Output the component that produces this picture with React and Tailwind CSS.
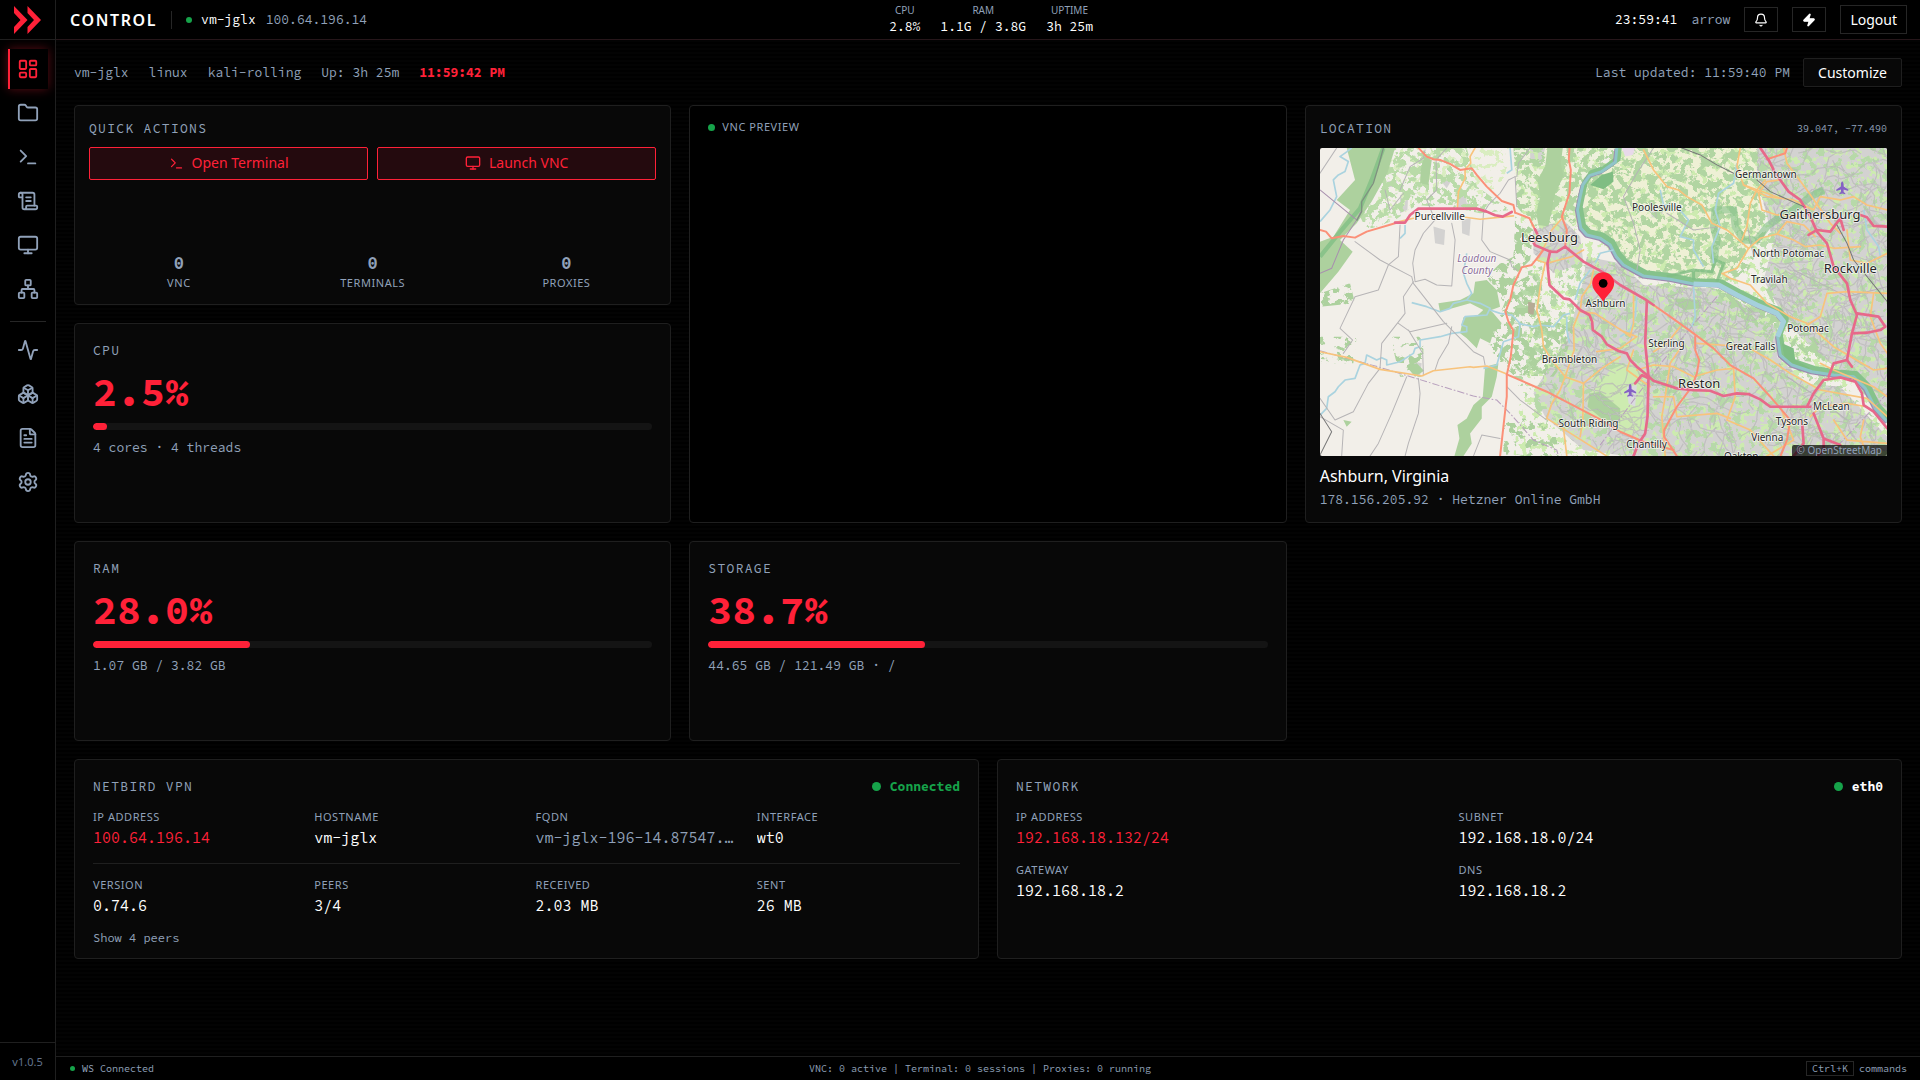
import {
  Activity, Bell, Boxes, FileText, Folder, LayoutDashboard, Monitor, Network,
  ScrollText, Settings, Terminal, Zap,
} from 'lucide-react';

const mainNav = [
  { label: 'Dashboard', icon: LayoutDashboard, active: true },
  { label: 'Files', icon: Folder },
  { label: 'Terminal', icon: Terminal },
  { label: 'Scripts', icon: ScrollText },
  { label: 'VNC', icon: Monitor },
  { label: 'Network', icon: Network },
];

const systemNav = [
  { label: 'Activity', icon: Activity },
  { label: 'Containers', icon: Boxes },
  { label: 'Logs', icon: FileText },
  { label: 'Settings', icon: Settings },
];

const headerStats = [
  { label: 'CPU', value: '2.8%' },
  { label: 'RAM', value: '1.1G / 3.8G' },
  { label: 'UPTIME', value: '3h 25m' },
];

const sessionCounts = [
  { label: 'VNC', value: 0 },
  { label: 'TERMINALS', value: 0 },
  { label: 'PROXIES', value: 0 },
];

const vpnTop = [
  { label: 'IP ADDRESS', value: '100.64.196.14', tone: 'text-[#ff2138]' },
  { label: 'HOSTNAME', value: 'vm-jglx' },
  { label: 'FQDN', value: 'vm-jglx-196-14.87547.…', tone: 'text-slate-400' },
  { label: 'INTERFACE', value: 'wt0' },
];

const vpnBottom = [
  { label: 'VERSION', value: '0.74.6' },
  { label: 'PEERS', value: '3/4' },
  { label: 'RECEIVED', value: '2.03 MB' },
  { label: 'SENT', value: '26 MB' },
];

const networkFields = [
  { label: 'IP ADDRESS', value: '192.168.18.132/24', tone: 'text-[#ff2138]' },
  { label: 'SUBNET', value: '192.168.18.0/24' },
  { label: 'GATEWAY', value: '192.168.18.2' },
  { label: 'DNS', value: '192.168.18.2' },
];

const monoFont = "font-['Source_Code_Pro','DejaVu_Sans_Mono',monospace]";

/* ---------- map data ---------- */

const suburbs = [
  'M860 380 L960 400 L1030 465 L1240 475 L1400 560 L1440 610 L1430 680 L1520 760 L1620 770 L1761 920 V978 H980 L850 960 L735 860 L700 790 L740 720 L800 620 L820 560 L850 450Z',
  'M1370 54 H1761 V860 L1690 760 L1590 700 L1500 620 L1440 540 L1390 450 L1420 340 L1390 220 L1370 120Z',
  'M700 300 L790 270 L840 320 L850 400 L760 430 L735 400 L700 370Z',
  'M262 155 L290 150 L288 170 L265 172Z M300 195 L325 190 L322 240 L300 250Z M400 290 L435 300 L432 345 L405 340Z M470 200 L495 190 L500 220 L540 225 L515 235 L470 232Z M485 270 L512 265 L508 318 L486 310Z M420 150 L455 150 L440 175Z M345 695 L365 700 L360 740 L330 720Z',
  'M690 54 L735 54 L720 120 L690 90Z M185 54 H240 L225 95Z M1050 235 L1090 230 L1085 265 L1055 262Z',
];

const woods = [
  'M140 54 H285 L262 130 L215 215 L170 280 L120 330 L158 365 L115 425 L60 490 V335 L100 320 L150 240 L110 210 L165 150Z',
  'M742 54 H788 L782 100 L790 140 L765 190 L755 240 L745 290 L715 285 L708 250 L720 200 L712 150 L735 110Z',
  'M372 80 L395 90 L385 165 L360 160 L362 120Z',
  'M490 562 L530 558 L560 530 L580 550 L605 580 L582 600 L570 640 L540 625 L530 655 L500 625 L480 610Z',
  'M560 450 L590 480 L600 530 L560 545 L510 520 L420 545 L415 520 L480 510 L520 490 L525 455Z',
  'M555 710 L595 700 L590 740 L575 800 L545 830 L545 865 L510 910 L515 940 L490 978 H463 L478 925 L472 885 L500 865 L520 825 L548 800Z',
  'M868 790 L900 785 L960 835 V880 L905 865 L862 830Z M1125 505 L1200 510 L1205 535 L1155 540 L1125 525Z',
];

const roads = {
  minor: [
    'M165 335 L240 390 L335 440 L340 460 L430 575 L520 665 L550 680 L555 705',
    'M300 285 L295 380 L265 405 L235 480 L165 500 L120 595 L158 630 L130 670',
    'M340 455 L310 500 L315 550 L245 640 L240 715 L205 760 L160 845 L105 870 L60 805',
    'M440 54 L408 90 L410 180 L380 210 L405 270 L370 310 L345 360 L338 400 L345 455 L375 448 L410 465 L455 468 L465 330 L455 280',
    'M645 140 L625 150 L600 190 L565 225 L550 250 L545 330 L570 365 L630 390 L635 410 L650 420',
    'M320 740 L275 850 L235 940 L210 978 M355 745 L360 790 L355 850 L325 940 L315 978',
    'M455 590 L445 640 L415 690 L405 720 M295 580 L330 605 L440 580 M370 735 L368 670 L325 600',
    'M300 180 L330 110 L370 85 L375 60 M310 190 L270 240 L255 180 M650 140 L655 100 L690 54 M650 230 L645 140',
    'M60 860 L130 900 L125 978 M60 130 L110 54',
    'M620 770 L660 810 L740 870 M520 978 L545 915 L600 925',
    'M1000 280 L1020 360 L1010 420 M1000 280 L970 200 L1010 130 L1060 54 M1100 250 L1180 300 L1260 290 M1340 280 L1360 380',
    'M1480 420 L1560 460 L1640 500 L1761 470 M1460 740 L1550 800 L1640 870',
  ],
  primary: [
    'M60 665 L140 682 L240 718 L365 738 L400 722 L510 710 L520 712 L560 708 L620 732',
    'M525 54 L510 80 L512 100 L495 118 L495 145 L475 185 L472 235',
    'M495 262 L540 268 L640 258 M285 278 L340 265',
    'M790 260 L755 300 L735 345 L710 390 L740 400 L815 380 L850 360',
    'M735 400 L722 460 L710 540 L725 600 L730 650 L755 690 L795 740 L850 760 L905 715 L960 680 M795 740 L780 780 L755 820 L740 865 L920 978',
    'M880 420 L872 460 L845 500 L840 545 L885 550 L915 570 L960 598 M838 545 L820 590 L822 660 L795 740',
    'M850 760 L848 870 L840 920 M790 895 L800 978',
    'M960 598 L990 620 L1000 580 L1000 490 M890 665 L960 655 L1010 620 L960 600',
    'M1030 60 L1060 120 L1100 170 L1135 180 L1160 200 L1205 225 L1235 280 L1280 300 L1345 355',
    'M1270 430 L1310 415 L1345 355 M1265 430 L1290 445 L1350 465 L1400 520 L1470 560 L1520 580 L1600 650 L1720 720 L1761 715',
    'M1320 54 L1310 110 L1330 165 L1400 200 L1480 210 L1540 240 L1560 200 L1620 210 L1660 200 L1700 225 L1761 240',
    'M1395 150 L1370 180 L1350 220 L1340 290 L1325 330 M1450 54 L1460 100 L1520 180 L1590 280 L1620 310',
    'M1345 355 L1380 325 L1430 312 L1480 330 L1515 350 L1560 345 L1600 355 L1680 350 M1430 312 L1460 275 L1510 285 L1545 320',
    'M1440 150 L1400 155 L1375 190 L1385 240 L1430 255 L1500 260 M1330 165 L1400 190 L1440 205',
    'M1520 585 L1560 560 L1580 490 L1640 485 L1761 490 M1640 300 L1650 390 L1700 400 L1761 370',
    'M1720 490 L1710 560 L1740 640 L1761 670 M1761 800 L1720 770 L1600 720 L1560 700',
    'M1010 720 L1060 705 L1120 710 L1180 740 L1250 720 L1300 715 L1305 800 L1280 870 L1350 900 L1420 978',
    'M1190 640 L1260 645 L1340 650 L1410 690 L1470 730 L1560 780 L1700 805 L1761 860',
    'M1060 800 L1120 800 L1130 860 L1250 850 L1290 865 M1150 640 L1110 700 L1095 800 L1085 860 L1095 978',
    'M1440 830 L1480 930 L1400 978 M1530 860 L1560 830 L1640 820 L1700 830 M1600 870 L1640 930 L1761 940 M1690 870 L1680 920 L1700 978',
    'M1000 660 L980 720 L1050 770 M1140 590 L1100 640 L1060 665',
  ],
  trunk: [
    'M60 300 L78 305 L95 325 L130 318 L165 323 L200 305 L285 280',
    'M355 54 L380 80 L400 88 L420 90 L450 102 L480 120 L515 115 L530 135 L560 170 L605 213 L640 225 L645 248',
    'M645 248 L688 265 L705 300',
    'M808 54 L806 90 L812 120 L808 190 L785 260 L800 300 L795 350',
    'M730 360 L695 405 L665 412 L640 465 L630 510 L616 545 L625 575 L640 602 L632 680 L620 735 L620 800 L600 978',
    'M620 733 L740 785 L900 868 L960 905 L1030 935 L1120 960',
    'M1060 525 L1110 560 L1180 610 L1240 655 L1290 705 L1360 745 L1410 800 L1470 870',
    'M1185 620 L1185 660 L1197 690 L1190 730 L1175 770 L1130 830 L1092 900 L1092 920 L1130 978',
    'M1400 88 L1455 70 L1460 54 M1440 980 L1460 930 L1470 870',
  ],
  motorway: [
    'M285 278 L315 278 L330 255 L355 236 L530 236 L560 245 L585 256 L608 260 L635 246',
    'M705 298 L715 320 L700 338 L705 346 L750 365 L770 366 L795 350 L850 395 L905 425 L960 465 L1035 508 L1060 525',
    'M750 365 L742 400 L748 465 L790 505 L808 508 L840 540 L868 555 L876 575 L878 600 L905 620 L920 643 L955 663 L980 670 L990 690 L1010 710 L1040 735 L1060 752 L1130 775 L1180 780 L1230 782 L1270 798 L1310 790 L1345 792 L1380 808 L1410 830 L1530 830',
    'M1520 830 L1540 790 L1570 750 L1620 742 L1665 755 L1685 790 L1690 825 L1720 845 L1761 895',
    'M1040 515 L1035 640 L1045 740 L1042 860 L1035 910 L1015 940 L1000 978 M1005 760 L1025 735 L1045 745',
    'M1380 54 L1405 90 L1420 120 L1440 150 L1465 185 L1500 210 L1530 260 L1550 305 L1580 340 L1600 410 L1640 460 L1650 510 L1670 555 L1655 610 L1640 690 L1600 700 L1585 740',
    'M1525 315 L1550 300 L1590 305 L1620 265 L1630 300 M1680 255 L1700 262 L1720 288 L1761 290',
    'M1670 550 L1735 560 L1755 590 L1740 600 L1700 608 L1655 610',
    'M1540 850 L1570 925 L1570 960 L1550 978 M1505 870 L1510 940 L1480 978 M1570 925 L1620 945 M1640 690 L1655 710',
  ],
};

const streams = [
  'M155 54 L140 66 L120 80 L145 95 L135 125 L115 135 L100 150 L110 200 L90 240 L60 275',
  'M60 855 L80 835 L85 800 L105 785 L115 770 L135 750 L165 745 L180 705 L195 700 L200 675 L230 690 L245 683 L260 690 L260 705 L300 695 L340 670 L345 655 L360 650 L360 630 L420 620 L455 610 L500 605 L500 590 L485 585 L495 560 L560 555 L570 535 L540 520 L500 510 L460 520 L450 535 L420 545 L380 530 L335 518',
  'M500 370 L495 400 L490 430 L500 460 L515 490 L500 510 M620 130 L635 120 L630 54 M315 285 L315 310 L300 325',
  'M550 715 L590 705 L600 670 L610 635 L655 620 L660 580 L635 555 L600 550 L570 540 M655 580 L700 590 L720 585 L760 590 L790 555 L810 550',
  'M800 560 L800 600 L808 640 M870 420 L840 460 L825 510 M885 400 L900 370 L940 360 M960 620 L990 600 L1005 560 L1010 500',
  'M1080 180 L1090 225 L1130 230 L1165 270 L1140 320 L1180 330 L1180 360 L1210 410 M1310 100 L1300 160 L1255 190 L1245 240 L1260 290 L1235 350 L1240 400',
  'M1690 240 L1700 300 L1735 350 L1740 380 M1180 470 L1185 560 L1175 590',
];

const river = 'M950 54 L946 96 L905 125 L868 137 L848 165 L840 200 L832 240 L842 295 L860 315 L900 325 L930 345 L948 380 L970 405 L1030 438 L1110 448 L1180 462 L1255 465 L1310 495 L1370 525 L1430 550 L1450 575 L1432 620 L1440 675 L1475 705 L1535 725 L1600 735 L1660 740 L1695 775 L1725 835 L1761 875';

const towns = [
  { name: 'Purcellville', x: 419, y: 270 },
  { name: 'Leesburg', x: 748, y: 335, big: true },
  { name: 'Ashburn', x: 916, y: 532 },
  { name: 'Brambleton', x: 808, y: 700 },
  { name: 'South Riding', x: 865, y: 892 },
  { name: 'Poolesville', x: 1070, y: 244 },
  { name: 'Germantown', x: 1397, y: 145 },
  { name: 'Gaithersburg', x: 1559, y: 266, big: true },
  { name: 'North Potomac', x: 1464, y: 380 },
  { name: 'Rockville', x: 1650, y: 429, big: true },
  { name: 'Travilah', x: 1407, y: 460 },
  { name: 'Potomac', x: 1523, y: 605 },
  { name: 'Sterling', x: 1099, y: 651 },
  { name: 'Great Falls', x: 1351, y: 661 },
  { name: 'Reston', x: 1197, y: 774, big: true },
  { name: 'McLean', x: 1593, y: 840 },
  { name: 'Tysons', x: 1475, y: 885 },
  { name: 'Vienna', x: 1401, y: 932 },
  { name: 'Chantilly', x: 1039, y: 954 },
  { name: 'Oakton', x: 1323, y: 990 },
];

// Small seeded generator so the local streets come out the same on each render
function makeStreets(count) {
  let seed = 41;
  const rand = () => {
    seed = (seed * 16807) % 2147483647;
    return seed / 2147483647;
  };
  let d = '';
  for (let i = 0; i < count; i++) {
    let x = 680 + rand() * 1080;
    let y = 54 + rand() * 924;
    let angle = rand() * Math.PI * 2;
    d += `M${Math.round(x)} ${Math.round(y)}`;
    for (let j = 0; j < 5; j++) {
      angle += (rand() - 0.5) * 1.6;
      x += Math.cos(angle) * 22;
      y += Math.sin(angle) * 22;
      d += `L${Math.round(x)} ${Math.round(y)}`;
    }
  }
  return d;
}

const streets = makeStreets(620);

function Plane({ x, y }) {
  return (
    <path
      transform={`translate(${x} ${y})`}
      d="M0 -19 C3 -19 4 -14 4 -9 V-4 L18 5 V9 L4 5 V12 L9 16 V19 L0 17 L-9 19 V16 L-4 12 V5 L-18 9 V5 L-4 -4 V-9 C-4 -14 -3 -19 0 -19Z"
      fill="#8461c4"
    />
  );
}

// Cuts a flat area into irregular patches; a higher cut leaves fewer of them
function PatchFilter({ id, seed, frequency, cut }) {
  return (
    <filter id={id} x="0" y="0" width="1" height="1" colorInterpolationFilters="sRGB">
      <feTurbulence type="fractalNoise" baseFrequency={frequency} numOctaves="5" seed={seed} result="noise" />
      <feColorMatrix in="noise" values={`0 0 0 0 0  0 0 0 0 0  0 0 0 0 0  18 0 0 0 ${-cut}`} result="mask" />
      <feComposite in="SourceGraphic" in2="mask" operator="in" />
    </filter>
  );
}

function RegionMap() {
  return (
    <svg viewBox="60 54 1701 924" preserveAspectRatio="xMidYMid slice" className="absolute inset-0 h-full w-full" role="img" aria-label="Map of Ashburn, Virginia">
      <defs>
        <PatchFilter id="denseWoods" seed={7} frequency="0.045" cut={8.8} />
        <PatchFilter id="sparseWoods" seed={12} frequency="0.04" cut={10.1} />
        <PatchFilter id="meadow" seed={23} frequency="0.05" cut={10.2} />
        <clipPath id="builtUp">
          {suburbs.map((d) => <path key={d} d={d} />)}
        </clipPath>
      </defs>

      <rect x="60" y="54" width="1701" height="924" fill="#f2efe9" />
      <path d="M955 54 H1370 L1380 330 L1260 460 L1050 435 L960 380 L930 335 L850 300 L850 190 L870 140 L945 100Z" fill="#eef0d5" />
      <path d="M640 54 H945 L870 130 L840 190 L840 290 L700 290 L650 200Z" fill="#eef0dd" />
      {suburbs.map((d) => <path key={d} d={d} fill="#d3d2d1" />)}

      <g filter="url(#meadow)">
        <path d="M640 54 H1761 V978 H640 L690 560Z" fill="#cdebb0" />
        <path d="M240 54 H640 L600 180 L540 225 L480 120 L300 260 L220 270Z" fill="#d9edc0" />
      </g>
      <g filter="url(#sparseWoods)">
        <path d="M640 440 L800 380 L960 400 L1240 475 L1440 560 L1430 680 L1600 740 L1761 900 V978 H960 L900 940 L700 870 L640 740Z M1370 54 H1761 V850 L1580 700 L1440 560 L1380 450Z" fill="#b7d9a9" />
        <path d="M60 620 H170 L160 700 H60Z M610 860 L720 870 L860 978 H610Z M270 620 H370 V740 H300Z" fill="#add19e" />
      </g>
      <g filter="url(#denseWoods)">
        <path d="M240 54 H500 L530 170 L630 240 L540 250 L470 235 L350 225 L285 270 L200 300 L180 260 L240 170Z" fill="#b9dba8" />
        <path d="M640 54 H1370 L1400 300 L1340 430 L1260 460 L1050 435 L960 380 L930 335 L850 310 L800 270 L700 290 L650 230Z" fill="#b1d5a2" />
        <path d="M645 260 L700 300 L690 390 L650 430 L620 530 L560 440 L600 400 L640 380Z M560 640 L640 460 L720 420 L735 560 L820 600 L790 700 L760 740 L640 735 L600 700Z M60 490 L150 460 L165 520 L60 530Z" fill="#add19e" />
        <path d="M1240 470 L1440 560 L1430 620 L1300 560Z M1440 520 L1560 640 L1580 700 L1480 690Z M1040 720 L1130 720 L1130 790 L1060 790Z" fill="#b1d5a2" />
      </g>
      <path d="M965 705 L1015 700 L1020 740 L1035 800 L1030 900 L960 905 L870 855 L858 800 L900 760 L930 720Z" fill="#cdebb0" />
      {woods.map((d) => <path key={d} d={d} fill="#add19e" />)}
      <path d="M980 770 L1010 765 L1005 830 L985 820Z" fill="#dadae0" />
      <path d="M250 54 L215 150 L180 235 L125 300 L60 380" fill="none" stroke="#7fbd83" strokeWidth="13" opacity="0.75" />
      <path d="M320 710 L350 700 L372 722 L345 740Z M130 870 L155 875 L140 890Z" fill="#add19e" />
      <path d="M684 515 L705 520 L700 555 L684 550Z" fill="#b5ab95" />
      <path d="M965 54 H1005 L998 75 L975 80Z" fill="#e8d9ea" />

      <g clipPath="url(#builtUp)">
        <path d={streets} fill="none" stroke="#a9a7a9" strokeWidth="3" opacity="0.75" />
        <path d={streets} fill="none" stroke="#ffffff" strokeWidth="1" opacity="0.5" />
      </g>

      <path d={river} transform="translate(7 -9)" fill="none" stroke="#86c28b" strokeWidth="17" strokeLinejoin="round" />
      <path d="M1240 400 L1250 330 L1240 290 L1245 240 L1300 240 L1305 290 L1330 330 L1370 330 L1400 290 L1440 260 L1480 240 L1530 200 L1570 180" fill="none" stroke="#86c28b" strokeWidth="22" strokeLinejoin="round" opacity="0.6" />
      <path d="M1100 440 L1180 420 L1235 425 L1245 390 L1270 400 L1250 455 M1180 420 V450" fill="none" stroke="#7fbd83" strokeWidth="9" opacity="0.8" />
      <path d="M1445 640 L1480 655 L1485 690 L1530 715 L1500 725 L1455 695Z M870 165 L905 135 L938 125 L940 155 L910 178Z" fill="#7fbd83" />
      <path d={river} transform="translate(-3 3)" fill="none" stroke="#9d8bb0" strokeWidth="9" strokeLinejoin="round" />
      <path d={river} fill="none" stroke="#8fc5c8" strokeWidth="9" strokeLinejoin="round" />
      <path d="M1180 462 L1255 465 L1310 495 L1370 525 L1430 550 L1450 575 L1432 620" fill="none" stroke="#a5d0dc" strokeWidth="15" strokeLinejoin="round" />
      {streams.map((d) => <path key={d} d={d} fill="none" stroke="#aad3df" strokeWidth="5" strokeLinejoin="round" />)}

      <path d="M60 662 L240 712 L520 798 L590 810 L630 850 L700 930 L770 960 L775 978 M1250 500 L1090 690 L900 945 M1761 790 L1600 960" fill="none" stroke="#b79fbd" strokeWidth="3" strokeDasharray="22 6 5 6" />
      <path d="M60 180 L170 270 L130 330 L95 415 L60 430 M170 270 L185 240" fill="none" stroke="#a890ae" strokeWidth="3" />
      <path d="M250 54 L235 110 L220 160 L185 215 L185 245 L170 272" fill="none" stroke="#7f9180" strokeWidth="4" />

      <g fill="none" strokeLinejoin="round" strokeLinecap="round">
        {roads.minor.map((d) => <path key={d} d={d} stroke="#b6b4b6" strokeWidth="3" />)}
        {roads.primary.map((d) => <path key={d} d={d} stroke="#f8c37c" strokeWidth="5" />)}
        {roads.trunk.map((d) => <path key={d} d={d} stroke="#fb9078" strokeWidth="6" />)}
        {roads.motorway.map((d) => <path key={d} d={d} stroke="#e7698a" strokeWidth="8" />)}
        <path d="M1145 54 L1200 75 L1250 105 L1300 130 M1370 150 L1410 185 L1510 230 M1610 285 L1640 340 L1660 390 L1761 515 M60 975 L95 905 L60 850" stroke="#777" strokeWidth="3" />
      </g>

      <g textAnchor="middle" stroke="#ffffff" strokeOpacity="0.75" strokeWidth="5" strokeLinejoin="round" paintOrder="stroke" className="font-['Noto_Sans',sans-serif]">
        {towns.map((t) => (
          <text key={t.name} x={t.x} y={t.y} fontSize={t.big ? 39 : 30} fill="#262626">{t.name}</text>
        ))}
        <g fontSize="30" fontStyle="italic" fill="#8d6f99">
          <text x="530" y="397">Loudoun</text>
          <text x="531" y="433">County</text>
        </g>
      </g>
      <Plane x={1626} y={174} />
      <Plane x={990} y={781} />
      <path d="M909 515 C898 495 876 482 876 460 A33 33 0 0 1 942 460 C942 482 920 495 909 515Z" fill="#ff2138" />
      <circle cx="909" cy="460" r="13" fill="#000000" />
    </svg>
  );
}

/* ---------- building blocks ---------- */

function NavItem({ label, icon: Icon, active }) {
  return (
    <button
      aria-label={label}
      className={
        active
          ? 'flex size-10 items-center justify-center border-l-2 border-[#ff2138] bg-black pr-0.5 text-[#ff2138] shadow-[0_0_10px_rgba(255,33,56,0.35)]'
          : 'flex size-10 items-center justify-center text-slate-400'
      }
    >
      <Icon size={22} />
    </button>
  );
}

function Card({ className = '', children }) {
  return (
    <section className={`flex min-w-0 flex-col rounded-sm border border-[#1f1f1f] bg-[#080808] ${className}`}>
      {children}
    </section>
  );
}

function CardTitle({ children }) {
  return <h2 className={`${monoFont} text-[13px] leading-[17px] tracking-widest text-slate-400`}>{children}</h2>;
}

function Field({ label, value, tone = 'text-white' }) {
  return (
    <div className="min-w-0">
      <dt className="text-[11px] leading-4 tracking-wider text-slate-400">{label}</dt>
      <dd className={`${monoFont} mt-[3px] truncate text-[15px] leading-5 ${tone}`}>{value}</dd>
    </div>
  );
}

function UsageCard({ title, percent, detail }) {
  return (
    <Card className="col-span-2 p-[18px]">
      <CardTitle>{title}</CardTitle>
      <p className={`${monoFont} mt-2.5 text-[40px] leading-[46px] font-bold text-[#ff2138]`}>{percent.toFixed(1)}%</p>
      <div className="mt-2 h-[7px] overflow-hidden rounded-full bg-[#141414]">
        <div className="h-full rounded-full bg-[#ff2138]" style={{ width: `${percent}%` }} />
      </div>
      <p className={`${monoFont} mt-[9px] text-[13px] leading-[17px] text-slate-400`}>{detail}</p>
    </Card>
  );
}

function Sidebar() {
  return (
    <aside className="flex w-14 shrink-0 flex-col border-r border-[#1f1f1f] bg-black">
      <div className="flex h-10 items-center justify-center border-b border-[#1f1f1f]">
        <svg width="27" height="28" viewBox="0 0 27 28" fill="#ff2138" aria-label="Control">
          <path d="M0 0 L13.5 14 L0 28 V21 L6.5 14 L0 7Z" />
          <path d="M13.5 0 L27 14 L13.5 28 V21 L20 14 L13.5 7Z" />
        </svg>
      </div>
      <nav className="flex flex-col items-center gap-1 pt-[9px]">
        {mainNav.map((item) => <NavItem key={item.label} {...item} />)}
        <hr className="mt-2 mb-1 h-px w-9 border-0 bg-[#262626]" />
        {systemNav.map((item) => <NavItem key={item.label} {...item} />)}
      </nav>
      <p className="mt-auto border-t border-[#1f1f1f] py-2.5 text-center text-[11px] leading-[17px] text-slate-500">v1.0.5</p>
    </aside>
  );
}

function Header() {
  return (
    <header className="flex h-10 shrink-0 items-center justify-between border-b border-[#26161a] bg-black pr-[13px] pl-3.5 shadow-[0_1px_0_#4d0a12]">
      <div className="flex items-center">
        <h1 className="text-base leading-5 font-semibold tracking-widest text-white">CONTROL</h1>
        <span className="mx-3.5 h-[18px] w-px bg-[#262626]" />
        <span className="mr-[9px] size-1.5 rounded-full bg-[#16a34a]" />
        <p className={`${monoFont} flex gap-2.5 text-[13px]`}>
          <span className="text-white">vm-jglx</span>
          <span className="text-slate-400">100.64.196.14</span>
        </p>
      </div>
      <dl className="flex gap-5 pb-0.5 text-center">
        {headerStats.map((s) => (
          <div key={s.label}>
            <dt className="text-[10px] leading-4 text-slate-400">{s.label}</dt>
            <dd className={`${monoFont} text-[13px] leading-[17px] text-white`}>{s.value}</dd>
          </div>
        ))}
      </dl>
      <div className="flex items-center gap-3.5">
        <time className={`${monoFont} text-[13px] text-white`}>23:59:41</time>
        <span className={`${monoFont} text-[13px] text-slate-400`}>arrow</span>
        <button aria-label="Notifications" className="flex h-[25px] w-[34px] items-center justify-center border border-[#262626] text-white">
          <Bell size={14} />
        </button>
        <button aria-label="Power" className="flex h-[25px] w-[34px] items-center justify-center border border-[#262626] text-white">
          <Zap size={14} fill="currentColor" />
        </button>
        <button className="h-[29px] border border-[#262626] px-[9px] text-sm text-white">Logout</button>
      </div>
    </header>
  );
}

function StatusBar() {
  return (
    <footer className={`${monoFont} flex h-6 shrink-0 items-center justify-between border-t border-[#1f1f1f] bg-black pr-[13px] pl-3.5 text-[10px] text-slate-400`}>
      <p className="flex items-center gap-[7px]">
        <span className="size-[5px] rounded-full bg-[#16a34a]" />
        WS Connected
      </p>
      <p>VNC: 0 active | Terminal: 0 sessions | Proxies: 0 running</p>
      <p className="flex items-center gap-[5px]">
        <kbd className={`${monoFont} border border-[#262626] px-[5px] leading-[13px]`}>Ctrl+K</kbd>
        commands
      </p>
    </footer>
  );
}

export default function App() {
  return (
    <div className="flex h-screen bg-black font-['Noto_Sans',sans-serif] text-white">
      <Sidebar />
      <div className="flex min-w-0 flex-1 flex-col">
        <Header />
        <main className="min-h-0 flex-1 overflow-auto bg-[repeating-linear-gradient(0deg,#000000_0,#000000_2px,#030303_2px,#030303_4px)] p-[18px]">
          <div className="flex items-center justify-between">
            <p className={`${monoFont} flex gap-5 text-[13px] text-slate-400`}>
              <span>vm-jglx</span>
              <span>linux</span>
              <span>kali-rolling</span>
              <span>Up: 3h 25m</span>
              <time className="font-bold text-[#ff2138]">11:59:42 PM</time>
            </p>
            <div className="flex items-center gap-[13px]">
              <p className={`${monoFont} text-[13px] text-slate-400`}>Last updated: 11:59:40 PM</p>
              <button className="h-[29px] rounded-xs border border-[#1f1f1f] bg-[#080808] px-3.5 text-sm text-white">Customize</button>
            </div>
          </div>

          <div className="mt-[18px] grid auto-rows-[200px] grid-cols-6 gap-[18px]">
            <Card className="col-span-2 px-3.5 pt-3.5 pb-[13px]">
              <CardTitle>QUICK ACTIONS</CardTitle>
              <div className="mt-2.5 grid grid-cols-2 gap-[9px]">
                <button className="flex h-[33px] items-center justify-center gap-2 rounded-xs border border-[#ff2138] bg-[#240a0e] pb-px text-sm text-[#ff2138]">
                  <Terminal size={15} />
                  Open Terminal
                </button>
                <button className="flex h-[33px] items-center justify-center gap-2 rounded-xs border border-[#ff2138] bg-[#240a0e] pb-px text-sm text-[#ff2138]">
                  <Monitor size={16} />
                  Launch VNC
                </button>
              </div>
              <dl className="mt-auto grid grid-cols-3 gap-3.5 text-center text-slate-400">
                {sessionCounts.map((s) => (
                  <div key={s.label} className="flex flex-col-reverse">
                    <dt className="text-[11px] leading-4 tracking-wider">{s.label}</dt>
                    <dd className={`${monoFont} text-[17px] leading-6 font-bold`}>{s.value}</dd>
                  </div>
                ))}
              </dl>
            </Card>

            <section className="col-span-2 row-span-2 rounded-sm border border-[#1f1f1f] bg-black px-[18px] py-[13px]">
              <h2 className="flex items-center gap-[7px] text-[11px] leading-4 tracking-wider text-slate-400">
                <span className="size-[7px] rounded-full bg-[#16a34a]" />
                VNC PREVIEW
              </h2>
            </section>

            <Card className="col-span-2 row-span-2 p-3.5">
              <div className="flex items-center justify-between">
                <CardTitle>LOCATION</CardTitle>
                <span className={`${monoFont} text-[10px] text-slate-400`}>39.047, -77.490</span>
              </div>
              <div className="relative mt-[11px] min-h-0 flex-1 overflow-hidden rounded-xs">
                <RegionMap />
                <a href="#osm" className="absolute right-0 bottom-0 rounded-tl-xs bg-black/70 px-[5px] text-[10px] leading-[11px] text-slate-400">
                  © OpenStreetMap
                </a>
              </div>
              <p className="mt-2 text-base leading-6 text-white">Ashburn, Virginia</p>
              <p className={`${monoFont} mt-[3px] text-[13px] leading-[17px] text-slate-400`}>178.156.205.92 · Hetzner Online GmbH</p>
            </Card>

            <UsageCard title="CPU" percent={2.5} detail="4 cores · 4 threads" />
            <UsageCard title="RAM" percent={28} detail="1.07 GB / 3.82 GB" />
            <UsageCard title="STORAGE" percent={38.7} detail="44.65 GB / 121.49 GB · /" />

            <Card className="col-span-3 col-start-1 p-[18px]">
              <div className="flex items-center justify-between">
                <CardTitle>NETBIRD VPN</CardTitle>
                <p className={`${monoFont} flex items-center gap-[9px] text-[13px] leading-[17px] font-bold text-[#16a34a]`}>
                  <span className="size-[9px] rounded-full bg-[#16a34a]" />
                  Connected
                </p>
              </div>
              <dl className="mt-3.5 grid grid-cols-4 gap-x-[18px]">
                {vpnTop.map((f) => <Field key={f.label} {...f} />)}
              </dl>
              <dl className="mt-[15px] grid grid-cols-4 gap-x-[18px] border-t border-[#1f1f1f] pt-[13px]">
                {vpnBottom.map((f) => <Field key={f.label} {...f} />)}
              </dl>
              <button className={`${monoFont} mt-3.5 self-start text-xs leading-4 text-slate-400`}>Show 4 peers</button>
            </Card>

            <Card className="col-span-3 p-[18px]">
              <div className="flex items-center justify-between">
                <CardTitle>NETWORK</CardTitle>
                <p className={`${monoFont} flex items-center gap-[9px] text-[13px] leading-[17px] font-bold text-white`}>
                  <span className="size-[9px] rounded-full bg-[#16a34a]" />
                  eth0
                </p>
              </div>
              <dl className="mt-3.5 grid grid-cols-2 gap-x-[18px] gap-y-3.5">
                {networkFields.map((f) => <Field key={f.label} {...f} />)}
              </dl>
            </Card>
          </div>
        </main>
        <StatusBar />
      </div>
    </div>
  );
}
